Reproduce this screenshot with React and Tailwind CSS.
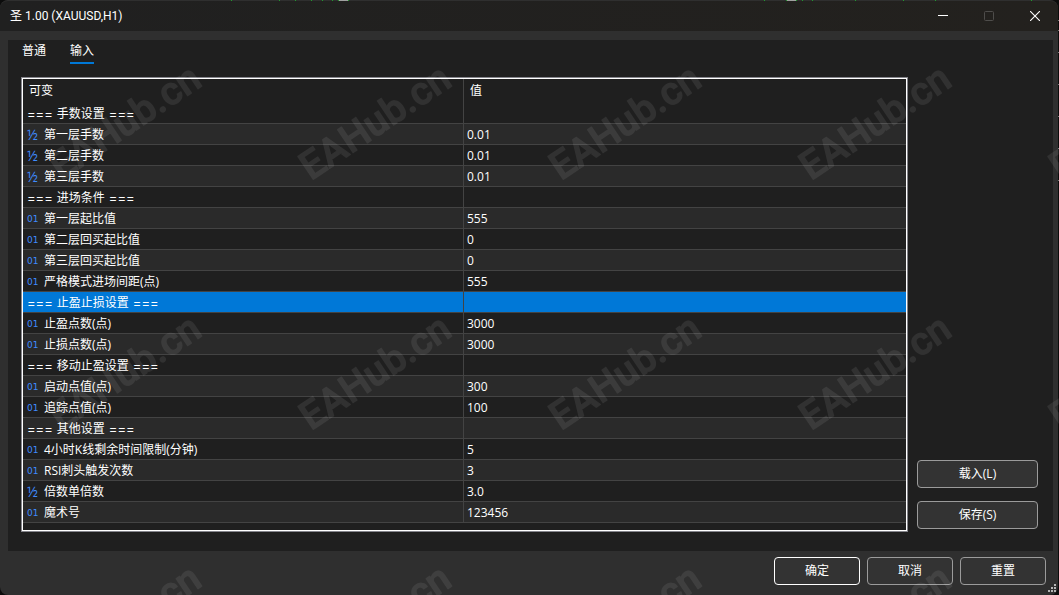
const TEXT_FONT = "font-['Open_Sans','Noto_Sans_CJK_SC',sans-serif]";

const inputs = [
  { section: '手数设置' },
  { kind: 'double', name: '第一层手数', value: '0.01' },
  { kind: 'double', name: '第二层手数', value: '0.01' },
  { kind: 'double', name: '第三层手数', value: '0.01' },
  { section: '进场条件' },
  { kind: 'int', name: '第一层起比值', value: '555' },
  { kind: 'int', name: '第二层回买起比值', value: '0' },
  { kind: 'int', name: '第三层回买起比值', value: '0' },
  { kind: 'int', name: '严格模式进场间距(点)', value: '555' },
  { section: '止盈止损设置', selected: true },
  { kind: 'int', name: '止盈点数(点)', value: '3000' },
  { kind: 'int', name: '止损点数(点)', value: '3000' },
  { section: '移动止盈设置' },
  { kind: 'int', name: '启动点值(点)', value: '300' },
  { kind: 'int', name: '追踪点值(点)', value: '100' },
  { section: '其他设置' },
  { kind: 'int', name: '4小时K线剩余时间限制(分钟)', value: '5' },
  { kind: 'int', name: 'RSI刺头触发次数', value: '3' },
  { kind: 'double', name: '倍数单倍数', value: '3.0' },
  { kind: 'int', name: '魔术号', value: '123456' },
];

function TitleBar() {
  return (
    <header className="flex h-[30px] items-center bg-linear-to-r from-[#202020] to-[#23211e] pl-[10px]">
      <h1 className="flex-1 font-['Roboto','Noto_Sans_CJK_SC',sans-serif] text-[12px] leading-4">圣 1.00 (XAUUSD,H1)</h1>
      <button type="button" aria-label="最小化" className="flex h-full w-[46px] items-center justify-center">
        <svg width="10" height="10" viewBox="0 0 10 10" shapeRendering="crispEdges">
          <path d="M0 4.5H10" stroke="#fff" />
        </svg>
      </button>
      <button type="button" aria-label="最大化" disabled className="flex h-full w-[46px] items-center justify-center">
        <svg width="10" height="10" viewBox="0 0 10 10" fill="none">
          <rect x="0.5" y="0.5" width="9" height="9" rx="1" stroke="#4e4d4b" />
        </svg>
      </button>
      <button type="button" aria-label="关闭" className="flex h-full w-[46px] items-center justify-center">
        <svg width="10" height="10" viewBox="0 0 10 10" fill="none">
          <path d="M0 0L10 10M10 0L0 10" stroke="#fff" strokeWidth="1.1" />
        </svg>
      </button>
    </header>
  );
}

function Tabs() {
  const tab = 'h-6 border-b-2 text-[12px] leading-5';
  return (
    <div role="tablist" className="flex gap-6">
      <button type="button" role="tab" aria-selected="false" className={`${tab} border-transparent`}>普通</button>
      <button type="button" role="tab" aria-selected="true" className={`${tab} border-[#0078d7]`}>输入</button>
    </div>
  );
}

function TypeIcon({ kind }) {
  return kind === 'double' ? (
    <span className="w-[17px] font-['Open_Sans'] text-[14px] leading-[18px] font-medium text-[#3f8cff]">½</span>
  ) : (
    <span className="w-[17px] font-['DejaVu_Sans'] text-[9px] leading-5 text-[#3f8cff]">01</span>
  );
}

function Marker() {
  return <span className="font-['Inter'] text-[13px]">===</span>;
}

function InputRow({ row }) {
  const tone = row.selected ? 'bg-[#0078d7]' : 'odd:bg-[#1f1f1f] even:bg-[#2a2a2a]';
  return (
    <tr aria-selected={!!row.selected} className={tone}>
      <td className="h-[21px] border-r border-b border-[#434343] pt-[2px] pl-1">
        {row.section ? (
          <div className="flex items-center gap-1 leading-[18px]">
            <Marker />
            <span>{row.section}</span>
            <Marker />
          </div>
        ) : (
          <div className="flex h-[18px] items-center leading-[18px]">
            <TypeIcon kind={row.kind} />
            <span>{row.name}</span>
          </div>
        )}
      </td>
      <td className="h-[21px] border-b border-[#434343] pt-[2px] pl-[3px] leading-[18px]">{row.value}</td>
    </tr>
  );
}

function InputTable() {
  return (
    <div className="flex-1 border border-[#85858c]">
      <div className="h-full border border-white pb-[7px]">
        <table className="w-full table-fixed border-separate border-spacing-0 text-[12px]">
          <thead>
            <tr className="text-left">
              <th className="h-6 w-[441px] border-r border-[#434343] pl-[6px] leading-5 font-normal">可变</th>
              <th className="h-6 pl-[6px] leading-5 font-normal">值</th>
            </tr>
          </thead>
          <tbody>
            {inputs.map((row) => (
              <InputRow key={row.section || row.name} row={row} />
            ))}
          </tbody>
        </table>
      </div>
    </div>
  );
}

function DialogButton({ children, wide, primary }) {
  const width = wide ? 'w-[121px]' : 'w-[86px]';
  const border = primary ? 'border-white' : 'border-[#9b9b9b]';
  return (
    <button type="button" className={`h-7 rounded border bg-[#333333] text-[12px] leading-5 ${width} ${border}`}>
      {children}
    </button>
  );
}

function Watermark() {
  return (
    <svg aria-hidden="true" className="pointer-events-none absolute inset-0 h-full w-full">
      <defs>
        <pattern id="mark" width="250" height="250" patternUnits="userSpaceOnUse">
          <g opacity="0.08">
            <text
              x="61"
              y="181"
              transform="rotate(-34 61 181)"
              fill="#fff"
              stroke="#fff"
              strokeWidth="1"
              strokeLinejoin="round"
              className="font-['Roboto'] text-[39px] font-medium"
            >
              EAHub.cn
            </text>
          </g>
        </pattern>
      </defs>
      <rect width="100%" height="100%" fill="url(#mark)" />
    </svg>
  );
}

function BackdropTicks() {
  const greens = [231, 279, 295, 311, 322, 332, 338, 348, 764, 786, 796, 802, 812, 855, 903, 935, 1031];
  const greys = [20, 30, 52, 84, 116, 148, 180];
  return (
    <svg aria-hidden="true" className="pointer-events-none absolute inset-0 h-full w-full" shapeRendering="crispEdges">
      {greens.map((x) => (
        <rect key={x} x={x} y="0" width="1" height="1" fill="#1f9a2c" />
      ))}
      <rect x="339" y="0" width="9" height="1" fill="#a0a0a0" />
      <rect x="787" y="0" width="9" height="1" fill="#a0a0a0" />
      {greys.map((y) => (
        <rect key={y} x="1058" y={y} width="1" height="1" fill="#777" />
      ))}
    </svg>
  );
}

function ResizeGrip() {
  return (
    <svg aria-hidden="true" className="absolute right-[2px] bottom-[3px]" width="8" height="8" viewBox="0 0 8 8" fill="#b5b5b5">
      <path d="M6 0h2v2H6zM6 3h2v2H6zM3 3h2v2H3zM6 6h2v2H6zM3 6h2v2H3zM0 6h2v2H0z" />
    </svg>
  );
}

export default function App() {
  return (
    <div className={`relative flex min-h-screen flex-col bg-[#0c0c0c] pr-px text-white ${TEXT_FONT}`}>
      <div className="relative flex flex-1 flex-col overflow-hidden rounded-lg border-t border-[#2f2f2f] bg-[#2f2f2f]">
        <TitleBar />
        <main className="mt-[9px] mr-[5px] ml-2 flex flex-1 flex-col bg-[#1f1f1f] pr-[15px] pb-[19px] pl-[13px]">
          <div className="mb-[13px] pl-px">
            <Tabs />
          </div>
          <div className="flex flex-1 gap-[9px]">
            <InputTable />
            <div className="flex flex-col justify-end gap-[13px] pb-[3px]">
              <DialogButton wide>载入(L)</DialogButton>
              <DialogButton wide>保存(S)</DialogButton>
            </div>
          </div>
        </main>
        <footer className="flex h-11 items-start justify-end gap-[7px] pt-[6px] pr-3">
          <DialogButton primary>确定</DialogButton>
          <DialogButton>取消</DialogButton>
          <DialogButton>重置</DialogButton>
        </footer>
        <ResizeGrip />
      </div>
      <BackdropTicks />
      <Watermark />
    </div>
  );
}
